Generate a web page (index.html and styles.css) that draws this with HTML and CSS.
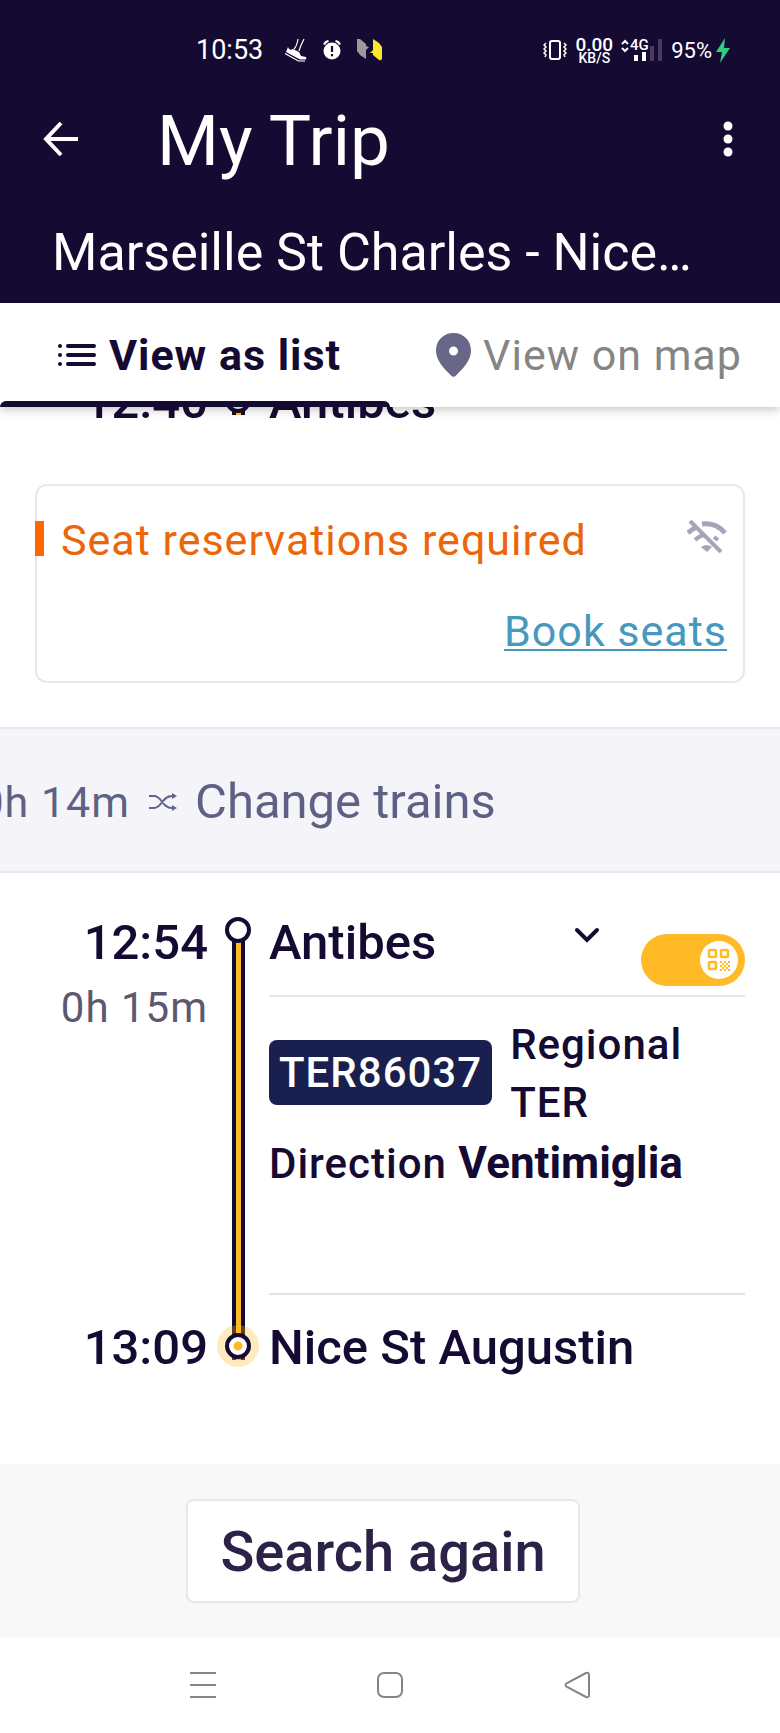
FILE: index.html
```
<!DOCTYPE html>
<html lang="en">
<head>
    <meta charset="UTF-8">
    <meta name="viewport" content="width=device-width, initial-scale=1.0">
    <title>My Trip</title>
    <link rel="stylesheet" href="styles.css">
</head>
<body>
    <header class="app-header">
        <div class="status-bar">
            <div class="status-group">
                <span class="clock">10:53</span>
                <svg class="shoe" width="22" height="24" viewBox="0 0 22 24">
                    <path d="M9 11Q12 8 13 1M14 13Q15 9 19 1" fill="none" stroke="#fff" stroke-width="1.200"/>
                    <path d="M3 9q1 4 5 2l6 3 2 4 5 1q1 3-1 2.500h-5L1 14z" fill="#fff"/>
                    <path d="M0 15.500L13.500 23H20" fill="none" stroke="#fff" stroke-width="1.200"/>
                </svg>
                <svg width="18" height="20" viewBox="0 0 18 20">
                    <circle cx="9" cy="11" r="8.500" fill="#fff"/>
                    <path d="M1 4.500Q2.500 1.500 5.500 1M17 4.500Q15.500 1.500 12.500 1" fill="none" stroke="#fff" stroke-width="2.200"/>
                    <path d="M9 6v6M9 14v2.200" stroke="#150a32" stroke-width="2.200"/>
                </svg>
                <svg width="25" height="22" viewBox="0 0 25 22">
                    <path d="M0 0l3 0 6 5v2l3 1-3 3v9l-6-4-3-4z" fill="#9a9a9c"/>
                    <path d="M16 0l6 4 3 4v11q0 3-3 2l-6-5v-2h-3l3-3z" fill="#fbe62b"/>
                </svg>
            </div>
            <div class="status-group status-right">
                <svg width="24" height="22" viewBox="0 0 24 22" fill="none" stroke="#fff">
                    <rect x="7" y="2" width="10" height="18" rx="2" stroke-width="2"/>
                    <path d="M3 4L1 6l2 2-2 2 2 2-2 2 2 2-1 2M21 4l2 2-2 2 2 2-2 2 2 2-2 2 1 2" stroke-width="1.500"/>
                </svg>
                <span class="speed"><b>0.00</b><small>KB/S</small></span>
                <svg class="signal" width="42" height="24" viewBox="0 0 42 24">
                    <path d="M1 6l3-3 3 3M1 10l3 3 3-3" fill="none" stroke="#fff" stroke-width="2"/>
                    <text x="9" y="12">4G</text>
                    <path d="M13 17h4v6h-4zM21 14h4v9h-4z" fill="#fff"/>
                    <path d="M29 8h4v15h-4zM37 1h4v22h-4z" fill="#453c5e"/>
                </svg>
                <span class="battery">95%</span>
                <svg width="14" height="25" viewBox="0 0 14 25"><path d="M9 0L0 14h6L4 25l10-15H8z" fill="#2fcf80"/></svg>
            </div>
        </div>
        <div class="toolbar">
            <button class="icon-button" aria-label="Back">
                <svg width="36" height="36" viewBox="0 0 36 36" fill="none" stroke="#fff" stroke-width="4"><path d="M18 2L3 18l15 16M3 18h32"/></svg>
            </button>
            <h1>My Trip</h1>
            <button class="icon-button" aria-label="More options">
                <svg width="18" height="36" viewBox="0 0 18 36" fill="#fff"><circle cx="9" cy="5" r="4.500"/><circle cx="9" cy="18" r="4.500"/><circle cx="9" cy="31" r="4.500"/></svg>
            </button>
        </div>
        <h2 class="route">Marseille St Charles - Nice St Augustin</h2>
        <nav class="tabs">
            <button class="tab active">
                <svg width="40" height="24" viewBox="0 0 40 24" stroke="#150a32" stroke-width="4" stroke-linecap="round"><path d="M11 3h26M11 12h26M11 21h26M3 3h0M3 12h0M3 21h0"/></svg>
                View as list
            </button>
            <button class="tab">
                <svg width="35" height="44" viewBox="0 0 35 44"><path fill="#686787" fill-rule="evenodd" d="M17.500 0C7.500 0 0 7.500 0 17.500c0 10 8 18 15 25q2.500 2.500 5 0c7-7 15-15 15-25C35 7.500 27.500 0 17.500 0zm0 13.500a4.500 4.500 0 1 1 0 9 4.500 4.500 0 0 1 0-9z"/></svg>
                View on map
            </button>
        </nav>
    </header>

    <main>
        <div class="leg leg-end">
            <span class="time">12:40</span>
            <span class="rail"><span class="node"></span></span>
            <span class="station">Antibes</span>
        </div>

        <section class="notice">
            <div class="notice-row">
                <p>Seat reservations required</p>
                <svg width="40" height="34" viewBox="0 0 40 34" fill="none" stroke="#a5a5b9" stroke-width="5">
                    <path d="M3 2l31 31" stroke-width="4"/>
                    <path d="M1 14q4-4 9-6M15 5q14-2 23 9"/>
                    <path d="M8 21q4-4 9-5M27 18l4 3" stroke-width="4"/>
                    <path d="M14 28q6-4 11 0l-5 5z" fill="#a5a5b9" stroke="none"/>
                </svg>
            </div>
            <a href="#">Book seats</a>
        </section>

        <section class="change">
            <span class="change-time">0h 14m</span>
            <svg width="28" height="18" viewBox="0 0 28 18" fill="none" stroke="#62658a" stroke-width="2">
                <path d="M0 3h5c8 0 8 12 18 12M0 15h5c8 0 8-12 18-12"/>
                <path d="M23 0l5 3-5 3zM23 12l5 3-5 3z" fill="#62658a" stroke="none"/>
            </svg>
            <span class="change-label">Change trains</span>
        </section>

        <section class="leg">
            <div class="times">
                <span class="time">12:54</span>
                <span class="duration">0h 15m</span>
                <span class="time arrival">13:09</span>
            </div>
            <div class="rail line">
                <span class="node"></span>
                <span class="node final"></span>
            </div>
            <div class="stops">
                <div class="departure">
                    <span class="station">Antibes</span>
                    <button class="icon-button chevron" aria-label="Show stops">
                        <svg width="26" height="16" viewBox="0 0 26 16" fill="none" stroke="#150a32" stroke-width="4" stroke-linecap="round"><path d="M3 3l10 10L23 3"/></svg>
                    </button>
                    <label class="ticket-toggle">
                        <input type="checkbox" checked aria-label="Add to pass">
                        <span class="knob">
                            <svg width="24" height="24" viewBox="0 0 24 24" fill="none" stroke="#ffba25" stroke-width="2.500">
                                <rect x="2" y="2" width="7" height="7" rx="1"/>
                                <rect x="14" y="2" width="7" height="7" rx="1"/>
                                <rect x="2" y="14" width="7" height="7" rx="1"/>
                                <path stroke-width="2" stroke-dasharray="2 2" d="M13 14h10M15 16h8M13 18h10M15 20h8M13 22h10"/>
                            </svg>
                        </span>
                    </label>
                </div>
                <div class="train">
                    <span class="train-number">TER86037</span>
                    <span class="train-type">Regional TER</span>
                </div>
                <p class="direction">Direction <b>Ventimiglia</b></p>
                <span class="station arrival-station">Nice St Augustin</span>
            </div>
        </section>
    </main>

    <div class="search">
        <button class="search-button">Search again</button>
    </div>

    <nav class="system-nav">
        <button class="icon-button" aria-label="Recent apps">
            <svg width="26" height="28" viewBox="0 0 26 28" stroke="#858585" stroke-width="2"><path d="M0 2h26M0 14h26M0 26h26"/></svg>
        </button>
        <button class="icon-button" aria-label="Home">
            <svg width="26" height="28" viewBox="0 0 26 28" fill="none" stroke="#858585" stroke-width="2"><rect x="1" y="2" width="24" height="24" rx="6"/></svg>
        </button>
        <button class="icon-button" aria-label="Back">
            <svg width="26" height="28" viewBox="0 0 26 28" fill="none" stroke="#858585" stroke-width="2"><path d="M22 2Q25 1 25 4v20q0 3-3 2L3 16Q0 14 3 12z"/></svg>
        </button>
    </nav>
</body>
</html>
```
FILE: styles.css
```
* {
    margin: 0;
    padding: 0;
    box-sizing: border-box;
}

body {
    background: #fff;
    color: #150a32;
    font-family: Roboto, "Liberation Sans", sans-serif;
    font-size: 43px;
    overflow-x: hidden;
    min-height: 100vh;
    display: flex;
    flex-direction: column;
}

button {
    font: inherit;
    color: inherit;
    background: none;
    border: none;
}

svg {
    display: block;
    flex-shrink: 0;
}

.icon-button {
    display: flex;
    cursor: pointer;
}

/* Header */
.app-header {
    position: relative;
    z-index: 2;
    background: #150a32;
    color: #fff;
}

.status-bar {
    display: flex;
    justify-content: space-between;
    align-items: center;
    height: 80px;
    padding: 20px 50px 0 196px;
}

.status-group {
    display: flex;
    align-items: center;
    gap: 16px;
}

.status-right {
    gap: 8px;
}

.clock {
    font-size: 27px;
    margin-right: 6px;
}

.speed {
    display: flex;
    flex-direction: column;
    align-items: center;
    font-size: 19px;
    line-height: 15px;
}

.speed b {
    font-weight: 500;
}

.speed small {
    font-size: 14px;
    font-weight: 500;
    line-height: 12px;
}

.signal text {
    font-size: 15px;
    font-weight: 500;
    fill: #fff;
}

.battery {
    margin-right: -4px;
    font-size: 22px;
}

.toolbar {
    display: flex;
    align-items: center;
    height: 121px;
    padding: 0 43px;
}

.toolbar .icon-button {
    padding-bottom: 4px;
}

h1 {
    flex: 1;
    padding-left: 78px;
    font-size: 71px;
    font-weight: 400;
    line-height: 80px;
}

.route {
    padding: 2px 80px 0 52px;
    font-size: 52px;
    font-weight: 400;
    line-height: 100px;
    white-space: nowrap;
    overflow: hidden;
    text-overflow: ellipsis;
}

.tabs {
    display: grid;
    grid-template-columns: 1fr 1fr;
    height: 104px;
    background: #fff;
    box-shadow: 0 2px 10px rgba(0, 0, 0, 0.25);
}

.tab {
    position: relative;
    display: flex;
    align-items: center;
    justify-content: center;
    gap: 12px;
    padding-left: 8px;
    color: #858585;
    letter-spacing: 1px;
    white-space: nowrap;
    cursor: pointer;
}

.tab.active {
    color: #150a32;
    font-weight: 700;
}

.tab.active::after {
    content: '';
    position: absolute;
    left: 0;
    right: 0;
    bottom: 0;
    height: 6px;
    background: #150a32;
    border-radius: 6px 6px 0 0;
}

/* Journey legs */
.leg {
    display: grid;
    grid-template-columns: 208px 60px 1fr;
    column-gap: 0;
    padding: 42px 35px 88px 0;
}

.leg .stops,
.leg-end .station {
    padding-left: 1px;
}

.leg-end {
    margin-top: -33px;
    padding: 0 35px 0 0;
}

.time,
.station {
    font-size: 49px;
    font-weight: 500;
    line-height: 56px;
}

.time {
    text-align: right;
}

.times {
    display: flex;
    flex-direction: column;
}

.duration {
    margin-top: 9px;
    color: #5c5870;
    font-size: 42px;
    letter-spacing: 1px;
    line-height: 56px;
    text-align: right;
}

.arrival {
    margin-top: auto;
}

.rail {
    display: flex;
    flex-direction: column;
    justify-content: space-between;
    align-items: center;
    padding: 2px 0 17px;
}

.leg-end .rail {
    justify-content: flex-end;
    background: linear-gradient(to right, #150a32 4px, #ffba25 4px 9px, #150a32 9px) center top / 13px 41px no-repeat;
}

.line {
    background: linear-gradient(to right, #150a32 4px, #ffba25 4px 9px, #150a32 9px) center 16px / 13px calc(100% - 32px) no-repeat;
}

.node {
    width: 26px;
    height: 26px;
    background: #fff;
    border: 4px solid #150a32;
    border-radius: 50%;
}

.node.final {
    background: radial-gradient(circle, #ffba25 4px, #fff 5px);
    box-shadow: 0 0 0 8px rgba(255, 186, 37, 0.3);
}

.departure {
    display: flex;
    align-items: flex-start;
    height: 82px;
    border-bottom: 2px solid #e7e7ea;
}

.departure .station {
    flex: 1;
}

.chevron {
    padding: 12px 40px 12px 0;
}

.ticket-toggle {
    position: relative;
    margin: 19px 0 0 1px;
    cursor: pointer;
}

.ticket-toggle input {
    display: block;
    appearance: none;
    width: 104px;
    height: 52px;
    background: #ffba25;
    border-radius: 26px;
}

.knob {
    position: absolute;
    top: 7px;
    right: 7px;
    display: grid;
    place-items: center;
    width: 38px;
    height: 38px;
    background: #fff;
    border-radius: 50%;
}

.train,
.direction {
    font-size: 42px;
    font-weight: 500;
    letter-spacing: 1px;
    line-height: 58px;
}

.train {
    display: flex;
    align-items: center;
    gap: 18px;
    padding-top: 19px;
}

.train-number {
    margin-bottom: 4px;
    padding: 4px 10px 3px;
    background: #19204f;
    color: #fff;
    border-radius: 8px;
}

.train-type {
    max-width: 200px;
}

.direction {
    margin-top: 2px;
    padding-bottom: 100px;
    border-bottom: 2px solid #e2e2ea;
}

.direction b {
    font-size: 44px;
    font-weight: 700;
    letter-spacing: 0;
}

.arrival-station {
    display: block;
    margin-top: 25px;
}

/* Seat reservation card */
.notice {
    margin: 54px 35px 44px;
    padding: 24px 16px 20px 0;
    border: 2px solid #e8e8ec;
    border-radius: 12px;
    letter-spacing: 1px;
    line-height: 60px;
}

.notice-row {
    display: flex;
    justify-content: space-between;
    align-items: center;
    margin: 0 0 31px -2px;
}

.notice-row svg {
    margin-bottom: 8px;
}

.notice p {
    display: flex;
    align-items: center;
    gap: 17px;
    color: #ec6509;
}

.notice p::before {
    content: '';
    width: 9px;
    height: 35px;
    margin-bottom: 4px;
    background: #ff6600;
}

.notice a {
    display: block;
    width: fit-content;
    margin-left: auto;
    color: #4698bd;
    text-decoration-thickness: 2px;
    text-underline-offset: 3px;
}

/* Change between trains */
.change {
    display: flex;
    align-items: center;
    height: 146px;
    padding-top: 3px;
    background: #f5f5f9;
    border: solid #e7e7ed;
    border-width: 2px 0;
    color: #5e6184;
}

.change-time {
    display: flex;
    justify-content: flex-end;
    width: 130px;
    margin-right: 19px;
    letter-spacing: 1px;
    white-space: nowrap;
}

.change-label {
    margin-left: 18px;
    font-size: 49px;
}

/* Footer */
.search {
    display: flex;
    justify-content: center;
    padding: 35px 14px 34px 0;
    margin-top: auto;
    background: #f8f8f8;
}

.search-button {
    padding: 18px 32px 16px;
    background: #fff;
    border: 2px solid #e7e7ea;
    border-radius: 8px;
    color: #2c2146;
    font-size: 56px;
    font-weight: 500;
    line-height: 66px;
    cursor: pointer;
}

.system-nav {
    display: flex;
    justify-content: space-between;
    align-items: center;
    height: 96px;
    padding: 0 190px;
}
```
